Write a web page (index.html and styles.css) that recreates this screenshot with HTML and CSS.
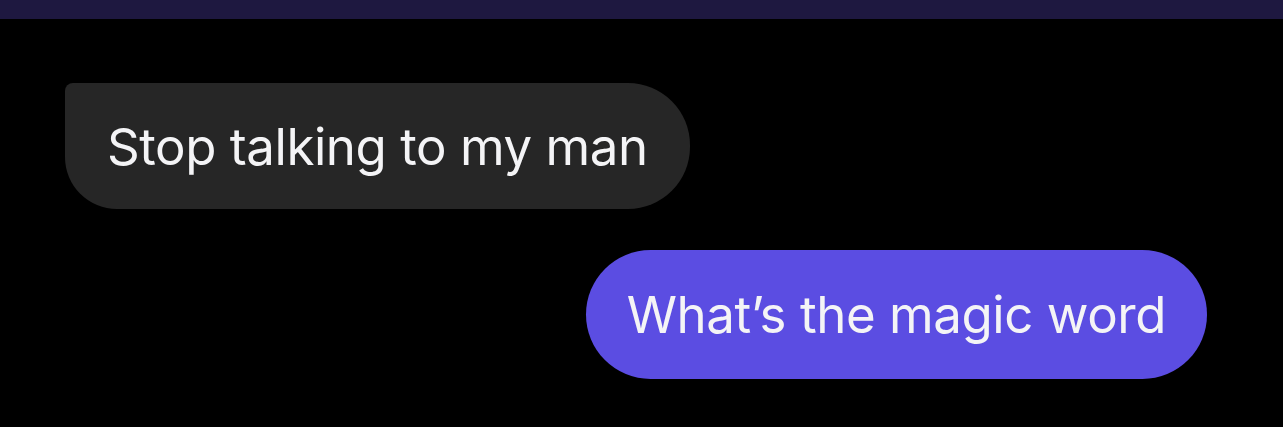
FILE: index.html
```html
<!DOCTYPE html>
<html lang="en">
<head>
<meta charset="utf-8">
<title>Messages</title>
<link rel="stylesheet" href="styles.css">
</head>
<body>
<div class="topbar"></div>
<main class="thread">
  <div class="bubble incoming">Stop talking to my man</div>
  <div class="bubble outgoing">What’s the magic word</div>
</main>
</body>
</html>
```
FILE: styles.css
```css
html, body {
  margin: 0;
  padding: 0;
  background: #000;
}
body {
  width: 1283px;
  height: 427px;
  overflow: hidden;
  font-family: Inter, "Liberation Sans", sans-serif;
}
.topbar {
  height: 19px;
  background: #1e1840;
}
.thread {
  display: flex;
  flex-direction: column;
  gap: 41px;
  padding: 64px 76px 0 65px;
}
.bubble {
  display: flex;
  align-items: center;
  color: #f4f4f6;
  font-size: 51px;
  letter-spacing: -0.45px;
  white-space: nowrap;
  box-sizing: border-box;
}
.incoming {
  align-self: flex-start;
  height: 126px;
  padding: 0 42px 0 42px;
  background: #262626;
  border-radius: 8px 62px 62px 52px;
}
.outgoing {
  align-self: flex-end;
  height: 129px;
  padding: 0 41px 0 41px;
  background: #5b4de2;
  border-radius: 65px;
}
```
